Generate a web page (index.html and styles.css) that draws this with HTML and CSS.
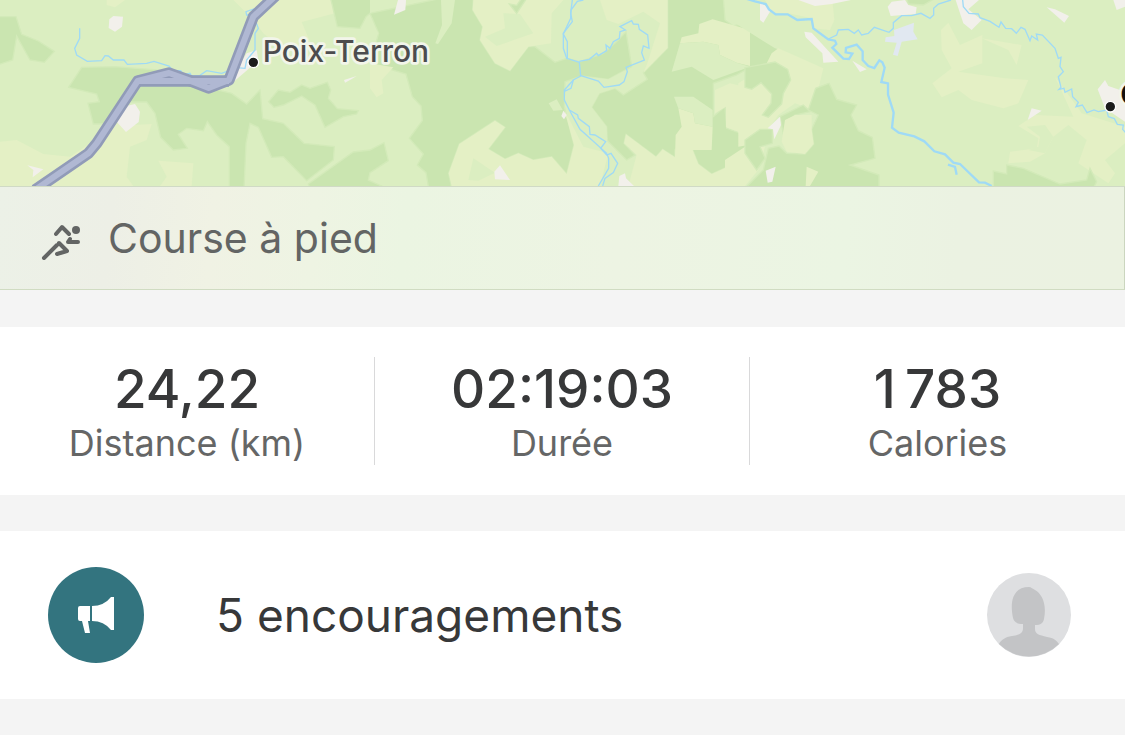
FILE: index.html
```html
<!DOCTYPE html>
<html lang="fr">

<head>
  <meta charset="UTF-8">
  <meta name="viewport" content="width=device-width, initial-scale=1">
  <title>Course à pied</title>
  <link rel="stylesheet" href="styles.css">
</head>

<body>
  <main class="activity">
    <svg class="map" viewBox="0 0 3375 558" preserveAspectRatio="xMidYMid slice" role="img" aria-label="Carte du parcours">
      <rect class="land" width="3375" height="558" />

      <!-- west -->
      <g class="field">
        <path d="M0 425L50 420 130 462 210 470 270 430 350 370 400 375 455 372 440 420 390 440 380 530 400 558H0Z" />
        <path d="M700 0H992L1005 40 905 66 930 125 850 150 790 100 760 60Z" />
        <path d="M475 482L580 490 575 558H480L500 530Z" />
        <path d="M320 0H375L345 22 320 15Z" />
      </g>
      <g class="forest">
        <path d="M-5 50H48L65 103 115 123 163 154 133 187 90 180 50 108 38 180 -5 194Z" />
        <path d="M206 262L245 202 345 200 500 212 620 262 695 280 740 312 780 270 788 356 850 370 912 430 1003 440 1000 480 920 542 850 470 815 472 775 382 750 370 738 430 732 565H688V440L650 405 622 365 610 392 560 385 535 403 562 445 520 450 482 412 465 340 440 306 380 306 330 372H280L264 310 298 305 290 282Z" />
        <path d="M806 305L835 270 870 277 905 255 930 265 982 247 992 270 985 295 1012 326 1075 332 1070 342 1030 350 975 382 945 315 905 288 850 315 822 322Z" />
        <path d="M992 -5H1140V15L1098 50 1080 85 1012 80Z" />
        <path d="M925 552L1060 456 1110 450 1152 428 1165 482 1110 518 1105 540 1160 565H930Z" />
      </g>
      <g class="town">
        <path d="M340 48L369 50 366 80 345 95 326 84 328 58Z" />
        <path d="M350 365L378 318 405 312 420 335 416 366 378 396Z" />
        <path d="M82 496L130 508 98 532 100 510Z" />
        <path d="M700 225L740 160 770 150 775 180 742 210 700 246Z" />
        <path d="M1032 240L1070 228 1050 240 1035 248Z" />
      </g>

      <!-- centre -->
      <g transform="translate(1110 0)">
        <g class="forest">
          <path d="M0 40L213 -5H310L308 30 338 80 330 120 375 190 420 212 475 140H495L555 187 590 175 630 185 700 160 745 120 768 95 785 200 715 238 635 228 585 245 583 320 612 435 590 522 545 470 490 480 445 460 405 477 355 447 405 382 375 362 268 432 236 520 245 565H176L168 518 142 495 160 462 118 415 157 362 153 318 127 290 108 222 35 200 0 190 26 100Z" />
          <path d="M893 -5H1060L1065 60 1090 78 1140 65V-5H1250L1180 60 1240 150 1240 200 1140 202 1100 225 1030 250 1030 350 1065 320 1070 385 1140 410V488L1085 495 1025 522 985 492 968 450H915V472L878 448 858 470 768 403 762 430 795 465 770 480 712 422 710 380 665 322 688 280 735 265 760 285 832 238 820 218 893 144Z" />
          <path d="M418 14L440 40 470 -5H455L440 20Z" />
        </g>
        <g class="field">
          <path d="M310 0H580L545 40 543 130 475 140 420 212 375 190 330 120 338 80 308 30Z" />
          <path d="M690 0H893V144L820 218 832 190 870 70 820 35 745 72 710 60Z" />
          <path d="M930 130L935 112 985 100 988 72 1028 58 1140 90V198L1100 188 1050 165 1045 135 1000 125Z" />
          <path d="M375 362L405 382 355 447 405 477 445 460 490 480 545 470 590 522 612 435 583 330 640 440 715 460 690 558H245L236 520 268 432Z" />
          <path d="M925 325L970 340 975 370 1028 380 1025 450H968L985 492 1025 522 1085 495 1140 490V558H775L800 465 762 430 768 403 858 470 878 448 915 472 917 405 935 380Z" />
          <path d="M1035 270L1080 250 1140 265V410L1115 418 1105 395 1068 382V320L1035 340Z" />
          <path d="M0 190L70 202 35 240 40 280 20 292 0 265Z" />
        </g>
        <g class="land">
          <path d="M213 0H255L245 70 204 132 196 130 216 75Z" />
          <path d="M0 0H85L0 40ZM0 60L26 100 0 125Z" />
          <path d="M930 130L905 215 965 200 1030 240 1140 200 1100 188 1050 165 1045 135 1000 125Z" />
          <path d="M912 290L970 290 1028 330V380L975 370 970 340 925 325Z" />
          <path d="M536 310L560 298 578 330 550 332ZM345 110L405 85 400 40 450 42 490 100 380 138Z" />
          <path d="M635 228L715 238 768 210 805 240 760 280 735 265 688 280 665 322 710 380 712 440 600 350 583 290Z" />
          <path d="M310 475L375 518 325 542 295 540Z" />
        </g>
        <g class="forest">
          <path d="M418 12L440 40 470 -5H455L440 16Z" />
        </g>
        <g class="town">
          <path d="M84 0H108L106 30 72 44Z" />
          <path d="M390 496L420 540 375 538 373 515ZM580 332L590 345 582 358 574 348ZM748 528L765 520 768 535 792 558H745Z" />
        </g>
      </g>

      <!-- east -->
      <g transform="translate(2235 0)">
        <g class="land">
          <path d="M-45 0H1140V558H0L-45 540 60 470 230 420 190 330 235 190 90 145-45 60Z" />
        </g>
        <g class="field">
          <path d="M80 160L100 145 235 205 205 330 150 310 100 345 40 430-20 440V250L60 200Z" />
          <path d="M60 0H262L268 60 255 90 203 85 200 55 130 40 80 38Z" />
          <path d="M588 90L610 68 645 135 712 105V190L640 215 780 235 850 240 820 310 775 325 680 300 640 270 590 292 562 250 620 205 590 150Z" />
          <path d="M820 378L870 345 985 350 930 230 960 270 1010 340 1140 380V430L1080 480 1110 520 1090 550 1000 490 1025 420 970 375 925 410 900 460 855 485 790 490 795 455 875 445 880 415Z" />
          <path d="M710 115L830 135 815 195 790 150Z" />
          <path d="M0 440L60 440 40 510 0 558H-60V480Z" />
        </g>
        <g class="land">
          <path d="M845 380L900 375 925 410 900 460 850 450 880 440 885 410Z" />
        </g>
        <g class="forest">
          <path d="M0 203L90 186 128 208 137 240 115 280 110 312 70 352 52 345 78 310 80 282 48 248 20 268 0 262Z" />
          <path d="M70 445L102 438 125 460 180 462 206 432 200 388 220 345 190 330 212 265 252 250 275 298 335 315 318 345 340 392 382 412 390 475 315 495 402 525V565H0L55 510Z" />
          <path d="M0 420L45 388 82 388V430L45 440 60 475 35 510 0 460ZM105 350L175 315 195 335 150 345 128 370 115 402Z" />
          <path d="M485 -5H570L535 15 490 12Z" />
          <path d="M745 513L785 522V495L835 505 945 552 1025 540 1035 505 1055 545 1045 565H745Z" />
        </g>
        <g class="field">
          <path d="M185 500L220 515 195 558H182ZM120 360L150 345 200 345 200 390 206 432 180 462 125 455 110 425Z" />
        </g>
        <g class="town">
          <path d="M160 0H318L260 12 210 18ZM440 5L480 0 490 15 515 22 512 42 437 48 428 20ZM632 0H702L670 28 710 60 680 90 655 70Z" />
          <path d="M45 5L78 30 55 68 45 60ZM178 95L200 98 280 185 235 188 232 160 182 112ZM322 182L365 208 345 216Z" />
          <path d="M905 22L930 28 972 48 958 68ZM1105 0H1140V20L1115 30ZM1058 268L1080 240 1090 258 1140 275V365L1080 325Z" />
          <path d="M68 385L105 350 108 375 88 418 84 388ZM62 512L92 500 82 545 68 548ZM848 360L860 325 890 332Z" />
        </g>
        <path class="lake" d="M447 90L507 68 505 95 518 118 470 125 458 168 444 164 455 128 420 125 422 112 448 108Z" />
      </g>

      <g class="stream">
        <path d="M239 85V115L224 145 230 165 262 184 305 182 315 167 325 168 340 180 372 180 382 193 440 190 462 184 507 198 520 212 542 212 550 224 570 220 575 228 600 226 620 212 665 220 710 203 735 205 740 180 765 150V100L775 85 760 45 740 45 738 35 765 26" />
        <g transform="translate(1110 0)">
          <path d="M607 0L602 40 607 65 580 100V145L590 175 628 187 632 228 610 240 583 270V300L598 330 630 388 710 460 716 475V505L685 558" />
          <path d="M640 0L622 4 603 30 602 55 580 102 592 125V175M628 184L658 178 680 160 685 167 710 152 708 135 720 145 730 125 748 115 750 95 766 90 750 80 785 62 790 72 805 73 808 88 833 105 837 145 820 138 815 158 823 180 768 202 772 215 762 245 748 255 702 262 685 243 630 226M610 240L603 265 583 274M598 330L623 345 625 355 658 380 660 403 675 405 707 425 692 445 710 465 723 460 743 490 730 518 705 535 698 558" />
        </g>
        <g transform="translate(2235 0)">
          <path d="M250 117L275 105 280 90 310 88 328 100 340 90 350 105 370 100 388 82 432 97 445 85V68L470 47H500L528 40 555 55 566 45V25L580 12 618 0" />
          <path d="M653 0L655 20 672 40 700 42 705 53 735 64 762 82 768 66 782 85 800 86 814 100 828 82 840 88 855 122 860 108 878 120 874 102 892 105 930 145 940 175 948 172 945 200 955 215 940 230 948 262 942 268 957 265 960 277 980 267 983 290 1000 307 993 320 1012 315 1026 338 1047 330 1060 335 1085 330 1090 350 1108 356 1117 373 1135 375 1133 388 1145 402" />
        </g>
      </g>
      <g class="river" transform="translate(2235 0)">
        <path d="M-10 -8L30 4 62 12 72 28 92 43H128L157 60 200 57 205 85 250 118 270 122 274 132 262 143 295 176 312 177 322 161 302 157 303 144 335 134 353 154V180L370 198 388 204 403 181 412 187 419 203 409 246 429 250V284L446 338 441 383 461 398 508 409 538 424 568 454 600 463 625 488 645 492 702 547 720 548 740 558" />
        <path d="M609 494L630 501 635 524" />
      </g>

      <g class="road">
        <path class="road-case" d="M105 570L265 460 290 430 413 243 507 219 570 242 626 264 687 240 760 50 840-25" />
        <path class="road-case" d="M413 243H687" />
        <path class="road-fill" d="M105 570L265 460 290 430 413 243 507 219 570 242 626 264 687 240 760 50 840-25" />
        <path class="road-fill" d="M413 243H687" />
      </g>

      <circle class="dot" cx="760" cy="187" r="16" />
      <text class="place" x="788" y="186">Poix-Terron</text>
      <circle class="dot" cx="3331" cy="320" r="16" />
      <text class="place place-main" x="3361" y="316">C</text>
    </svg>

    <header class="sport">
      <svg class="sport-icon" viewBox="0 0 40 44" aria-hidden="true">
        <circle cx="35" cy="14" r="4" />
        <path d="M15 18l6-7 7 7M37 26H27l2-3M3 42l13-13M18 27l8 8-10 3" />
      </svg>
      <h1>Course à pied</h1>
    </header>

    <dl class="stats">
      <div class="stat">
        <dt>Distance (km)</dt>
        <dd>24,22</dd>
      </div>
      <div class="stat">
        <dt>Durée</dt>
        <dd>02:19:03</dd>
      </div>
      <div class="stat">
        <dt>Calories</dt>
        <dd>1&#8239;783</dd>
      </div>
    </dl>

    <section class="cheers">
      <svg class="cheers-icon" viewBox="0 0 96 96" aria-hidden="true">
        <circle cx="48" cy="48" r="48" />
        <path d="M32 39h10v15h-2l2 12h-5l-3-12h-2q-2 0-2-2V41q0-2 2-2zM44 39q12 0 19-9h3v33h-3q-7-9-19-9z" />
      </svg>
      <h2>5 encouragements</h2>
      <svg class="avatar" viewBox="0 0 84 84" aria-hidden="true">
        <circle cx="42" cy="42" r="42" />
        <path d="M26 45C22 25 28 14 42 14c2 0 4 2 6 3 7 4 12 14 9 29-1 4-3 6-9 6v4c0 5 4 6 12 8 7 1 10 4 12 7a42 42 0 0 1-60 0c2-4 6-7 13-8 8-1 11-3 11-8v-4c-6 0-9-2-10-6z" />
      </svg>
    </section>
  </main>
</body>

</html>
```
FILE: styles.css
```css
body {
  margin: 0;
  background-color: #fff;
  color: #373839;
  font-family: Inter, "Liberation Sans", sans-serif;
}

h1,
h2,
dl,
dd {
  margin: 0;
  font-weight: 400;
}

.activity {
  border-bottom: 36px solid #f4f4f4;
}

/* map */
.map {
  display: block;
  width: 100%;
  height: 186px;
}

.land {
  fill: #dbeec1;
}

.field {
  fill: #e4f0c5;
}

.forest {
  fill: #cae5b0;
  stroke: #d3eab9;
  stroke-width: 4;
}

.town {
  fill: #f2f0eb;
}

.lake {
  fill: #e1e8f1;
}

.stream,
.river {
  fill: none;
  stroke: #9fdaf6;
  stroke-width: 4;
}

.river {
  stroke-width: 7;
}

.road {
  fill: none;
  stroke-linejoin: round;
}

.road-case {
  stroke: #919bb8;
  stroke-width: 34;
}

.road-fill {
  stroke: #b0b8d3;
  stroke-width: 18;
}

.dot {
  fill: #1c1c1c;
  stroke: #fff;
  stroke-width: 4;
}

.place {
  fill: #4c4c4e;
  stroke: #f2f5ea;
  stroke-width: 16;
  stroke-linejoin: round;
  paint-order: stroke;
  font-size: 90px;
  font-weight: 500;
}

.place-main {
  fill: #111;
  font-weight: 700;
}

/* sport banner */
.sport {
  display: flex;
  align-items: center;
  gap: 27px;
  height: 102px;
  padding-left: 41px;
  border-top: 1px solid #d0dac5;
  border-bottom: 1px solid #d0dcc2;
  border-right: 1px solid #cbd6bf;
  background: linear-gradient(95deg, #ecf1e7 0%, #edefe6 10%, #f0f2e4 19%, #eef4e3 28%, #ebf5e2 36%, #edf4e3 55%, #ebf5e3 75%, #ebf2e2 85%, #ebf2e1 100%);
  color: #636564;
}

.sport h1 {
  font-size: 41px;
}

.sport-icon {
  width: 40px;
  height: 44px;
  fill: none;
  stroke: currentColor;
  stroke-width: 4;
  stroke-linecap: round;
  stroke-linejoin: round;
}

.sport-icon circle {
  fill: currentColor;
  stroke: none;
}

/* figures */
.stats {
  display: grid;
  grid-template-columns: repeat(3, 1fr);
  padding: 30px 0;
  border-top: 37px solid #f4f4f4;
  border-bottom: 36px solid #f4f4f4;
}

.stat {
  display: flex;
  flex-direction: column-reverse;
  justify-content: center;
  height: 108px;
  border-right: 1px solid #d9d9da;
  text-align: center;
}

.stat:last-child {
  border-right: none;
}

.stat dt {
  color: #656666;
  font-size: 36px;
  line-height: 44px;
}

.stat dd {
  font-size: 53px;
  font-weight: 500;
  line-height: 64px;
}

/* encouragements */
.cheers {
  display: flex;
  align-items: center;
  height: 168px;
  padding: 0 54px 0 48px;
}

.cheers h2 {
  flex: 1;
  margin-left: 72px;
  font-size: 46px;
}

.cheers-icon {
  width: 96px;
  height: 96px;
  fill: #fff;
}

.cheers-icon circle {
  fill: #33747f;
}

.avatar {
  width: 84px;
  height: 84px;
  fill: #c3c4c6;
}

.avatar circle {
  fill: #dedfe1;
}
```
